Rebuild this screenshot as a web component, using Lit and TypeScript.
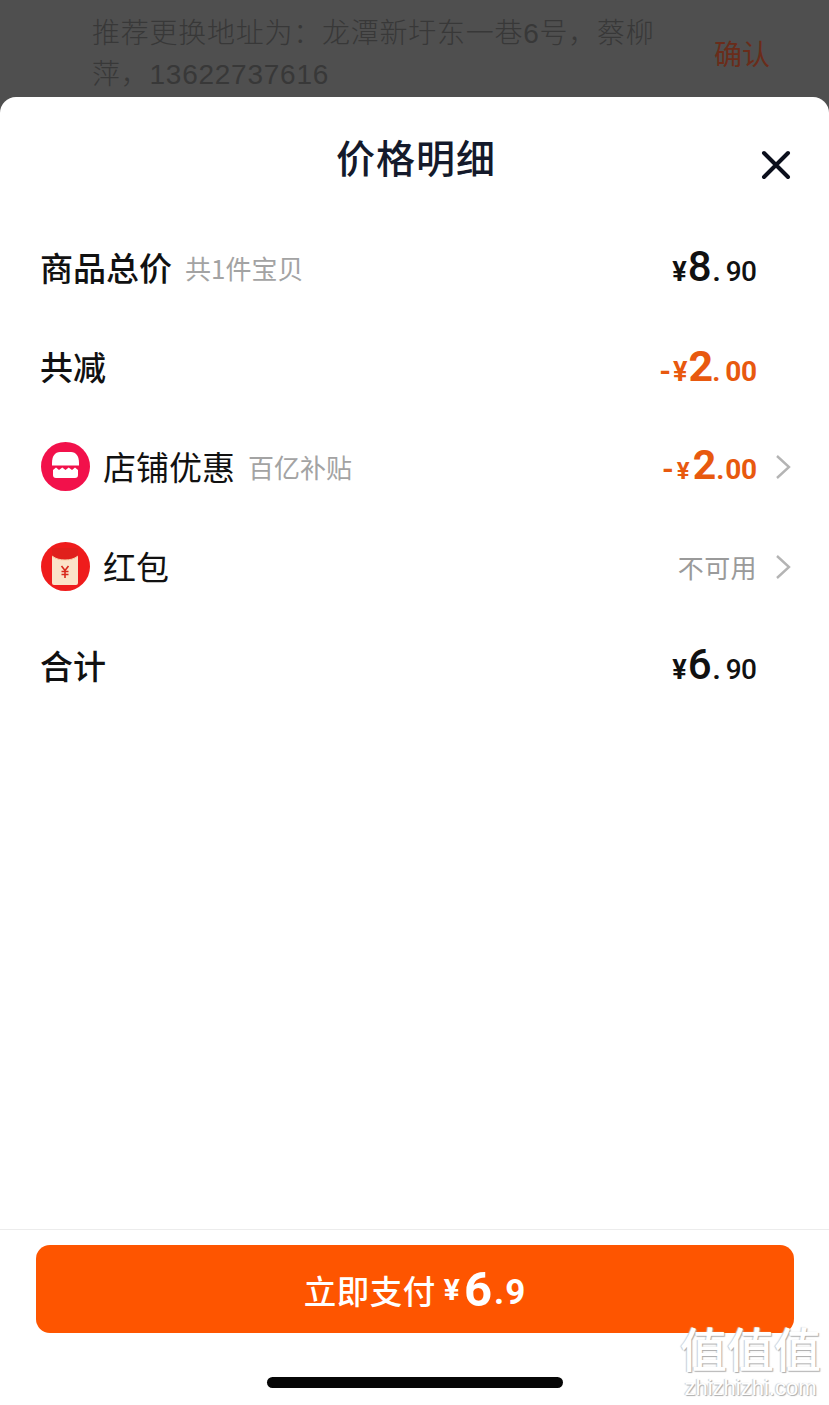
import { LitElement, html, css } from "lit";
import { customElement } from "lit/decorators.js";

const chevron = html`<svg class="chev" viewBox="0 0 16 26" fill="none" stroke="#b4b4b4" stroke-width="2.4"><path d="M2 2l12 11L2 24"/></svg>`;

const price = (sign: string, int: string, dec: string, cls = "") =>
  html`<span class="price ${cls}">${sign ? html`<span class="sign">${sign}</span>` : ""}<span class="yen">¥</span><span class="int">${int}</span><span class="dot">.</span><span class="dec">${dec}</span></span>`;

@customElement("app-root")
export class AppRoot extends LitElement {
  static styles = css`
    :host { display: block; position: relative; width: 829px; height: 1405px; overflow: hidden; background: #4f4f4f; font-family: "Noto Sans CJK SC", "Liberation Sans", sans-serif; color: #111; }
    .behind { height: 97px; box-sizing: border-box; padding: 0 59px 0 92px; display: flex; align-items: center; gap: 44px; color: #383838; }
    .behind p { margin: 0; flex: 1; font-family: "Liberation Sans", "Noto Sans CJK SC", sans-serif; font-size: 28px; line-height: 41px; letter-spacing: 0.75px; font-weight: 300; margin-top: 10px; }
    .behind span { color: #6a2c1a; font-size: 28px; white-space: nowrap; margin-top: 8px; }
    .sheet { height: 1308px; background: #fff; border-radius: 16px 16px 0 0; display: flex; flex-direction: column; }
    .head { height: 122px; flex: none; position: relative; display: flex; align-items: center; justify-content: center; }
    .head h1 { margin: -3px 0 0 3px; font-size: 39px; font-weight: 500; color: #141a2b; line-height: 1; letter-spacing: 1px; }
    .close { position: absolute; left: 761px; top: 53px; width: 30px; height: 30px; }
    .rows { flex: 1; display: flex; flex-direction: column; padding: 0 38px 0 41px; }
    .row { height: 99.6px; display: flex; align-items: center; }
    .label { font-size: 33px; line-height: 1; margin: -3px 0 0 -1px; }
    .strong { font-weight: 500; }
    .sub { font-size: 26px; color: #a3a3a3; margin: -3px 0 0 13px; font-weight: 400; }
    .ico { width: 49px; height: 49px; margin: -2px 14px 0 0; flex: none; display: block; }
    .right { margin-left: auto; display: flex; align-items: center; }
    .price { font-family: "Roboto", sans-serif; font-weight: 500; width: 130px; text-align: right; white-space: nowrap; color: #111; display: inline-block; margin: -4px 34px 0 0; line-height: 1; }
    .yen { font-size: 27px; font-weight: 700; margin-right: 1px; }
    .int { font-size: 42px; }
    .dot { font-size: 28px; margin: 0 5px 0 1px; font-weight: 700; }
    .dec { font-size: 28px; letter-spacing: -0.5px; margin-right: 0.500px; }
    .orange { color: #e8590f; font-weight: 700; }
    .orange .int { font-size: 43px; }
    .orange .dot { margin-left: -1px; }
    .orange .yen { margin-right: 1px; }
    .orange .dec { font-weight: 700; }
    .sign { font-size: 30px; margin-right: 2px; }
    .small .int { font-size: 41px; }
    .small .dot { margin: 0 1px 0 0; }
    .small .yen { font-size: 24px; margin-right: 3px; }
    .small .sign { margin-right: 3px; }
    .chev { width: 16px; height: 26px; flex: none; margin-top: -2px; }
    .withchev .price { margin-right: 18px; }
    .na { font-size: 26px; color: #9a9a9a; margin: -3px 18px 0 0; letter-spacing: 0.4px; }
    .foot { flex: none; height: 176px; box-sizing: border-box; border-top: 1px solid #ececec; padding: 15px 35px 0 36px; }
    .pay { height: 88px; border-radius: 14px; background: #fe5500; color: #fff; display: flex; align-items: center; justify-content: center; font-weight: 500; font-size: 32.5px; letter-spacing: 0.5px; }
    .pay .y, .pay .i, .pay .d { font-family: "Roboto", sans-serif; font-weight: 700; letter-spacing: 0; }
    .pay .y { font-size: 30px; margin: 0 4px 0 8px; }
    .pay .i { font-size: 49px; line-height: 1; }
    .pay .d { font-size: 35px; margin: 6px 0 0 2px; letter-spacing: 1px; }
    .bar { width: 296px; height: 11px; border-radius: 6px; background: #060606; margin: 44px auto 0; }
    .mark { position: absolute; left: 678px; top: 1322px; width: 145px; text-align: center; color: #fff; pointer-events: none; text-shadow: 1px 1px 1px #aaa, -1px 0 1px #ccc; }
    .big { font-size: 47px; line-height: 50px; font-weight: 500; white-space: nowrap; }
    .url { font-family: "Liberation Sans", sans-serif; font-size: 22px; line-height: 22px; margin-top: 5px; white-space: nowrap; }
  `;

  render() {
    return html`
      <div class="behind">
        <p>推荐更换地址为：龙潭新圩东一巷6号，蔡柳萍，13622737616</p>
        <span>确认</span>
      </div>
      <div class="sheet">
        <div class="head">
          <h1>价格明细</h1>
          <svg class="close" viewBox="0 0 30 30" stroke="#0b0f1c" stroke-width="4" stroke-linecap="round"><path d="M3 3l24 24M27 3L3 27"/></svg>
        </div>
        <div class="rows">
          <div class="row">
            <span class="label strong">商品总价</span><span class="sub">共1件宝贝</span>
            <div class="right">${price("", "8", "90")}</div>
          </div>
          <div class="row">
            <span class="label strong">共减</span>
            <div class="right">${price("-", "2", "00", "orange")}</div>
          </div>
          <div class="row">
            <svg class="ico" viewBox="0 0 49 49">
              <circle cx="24.5" cy="24.5" r="24.5" fill="#f2114b"/>
              <path d="M11 21c0-7 3-11 8-11h11c5 0 8 4 8 11v2.500H11z" fill="#fff"/>
              <path d="M12 28l3-2.500 3 2.500 3.300-2.500 3.200 2.500 3.200-2.500 3.300 2.500 3-2.500 3 2.500v5c0 2-1 3-3 3H15c-2 0-3-1-3-3z" fill="#fff"/>
            </svg>
            <span class="label">店铺优惠</span><span class="sub">百亿补贴</span>
            <div class="right withchev">${price("-", "2", "00", "orange small")}${chevron}</div>
          </div>
          <div class="row">
            <svg class="ico" viewBox="0 0 49 49">
              <circle cx="24.5" cy="24.5" r="24.5" fill="#ef1c1c"/>
              <rect x="11" y="6" width="26" height="37" rx="2" fill="#fbe3c8"/>
              <path d="M11 6h26v8c-4 3-8 4-13 4S15 17 11 14z" fill="#e0201c"/>
              <path d="M11 14c4 3 8 4 13 4s9-1 13-4" fill="none" stroke="#f9cfa8" stroke-width="1"/>
              <path d="M20.500 24l3.500 4.500 3.500-4.500M24 28.500V36M20.500 29.500h7M20.500 32.500h7" fill="none" stroke="#d8281c" stroke-width="1.600"/>
            </svg>
            <span class="label">红包</span>
            <div class="right withchev"><span class="na">不可用</span>${chevron}</div>
          </div>
          <div class="row">
            <span class="label strong">合计</span>
            <div class="right">${price("", "6", "90")}</div>
          </div>
        </div>
        <div class="foot">
          <div class="pay">立即支付<span class="y">¥</span><span class="i">6</span><span class="d">.9</span></div>
          <div class="bar"></div>
        </div>
      </div>
      <div class="mark"><div class="big">值值值</div><div class="url">zhizhizhi.com</div></div>
    `;
  }
}
